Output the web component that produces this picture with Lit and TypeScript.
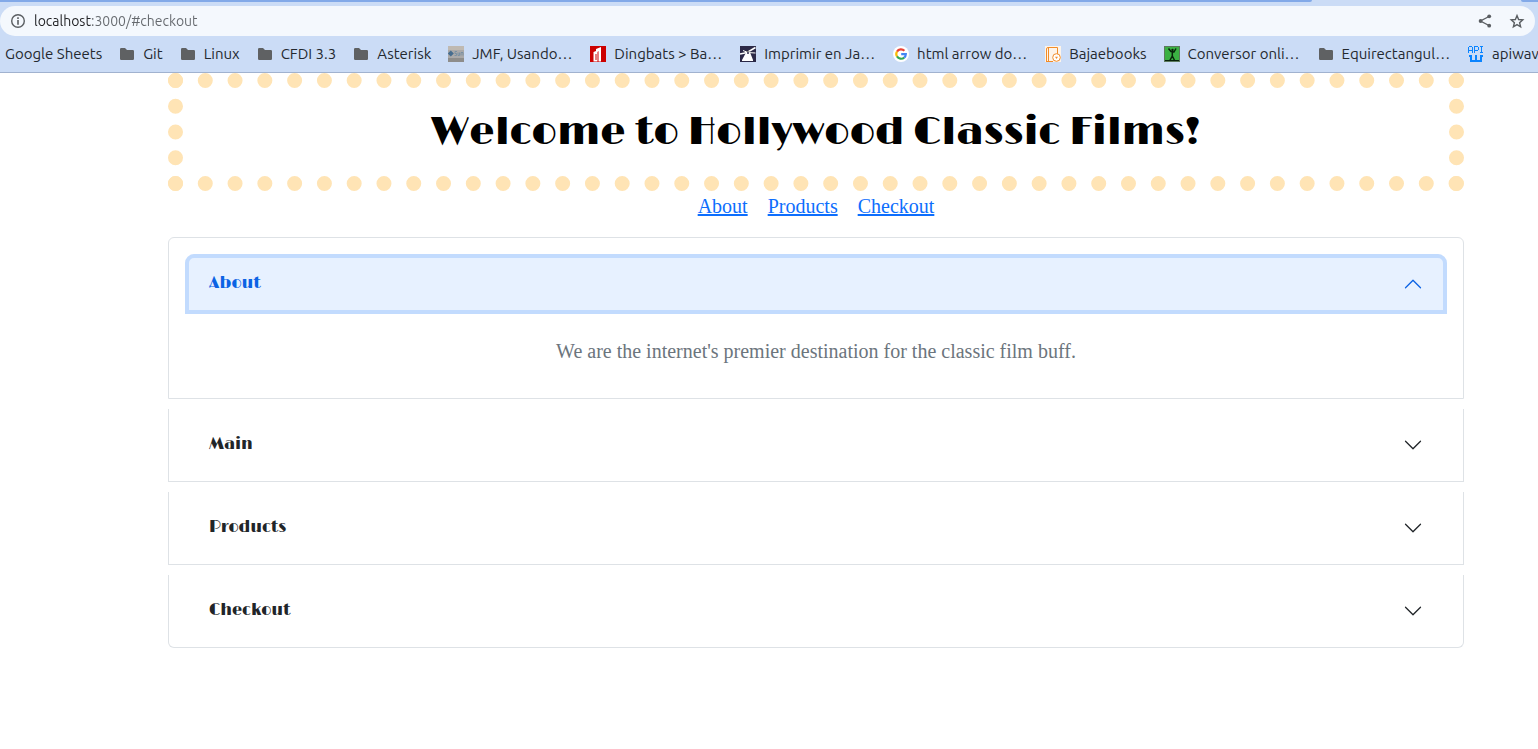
import { LitElement, html, svg, css, nothing } from "lit";
import { customElement, state } from "lit/decorators.js";

const folder = svg`<svg class="ico" viewBox="0 0 16 16"><path fill="#5f6163" d="M1 3.200Q1 2 2.200 2H6l2 2h5.800Q15 4 15 5.200v7.600q0 1.200-1.200 1.200H2.200Q1 14 1 12.800z"/></svg>`;

const icons: Record<string, unknown> = {
  folder,
  java: svg`<svg class="ico" viewBox="0 0 16 16">
    <rect width="16" height="16" fill="#aaa9a9"/><path fill="#bfb9b2" d="M0 0h16v4H0z"/>
    <path fill="#8e8d8b" d="M0 12h16v4H0z"/>
    <path fill="#466d8f" d="M2.800 4.500l3 3-3 3-3-3z"/>
    <path fill="none" stroke="#6f8ba2" stroke-width=".8" d="M9 5.500H7v2h1.500v2H6.500M10 6.500v3h1.500v-3M13 9.500v-3h2v3"/></svg>`,
  ding: svg`<svg class="ico" viewBox="0 0 16 16">
    <rect width="16" height="16" fill="#cc0000"/>
    <path fill="#fff" d="M3.500 6l2.500-1V3l5-2v14.500H8.500V5L7.500 6v9.500h-4z"/>
    <path fill="#cc0000" d="M5.500 8h1v6h-1z"/></svg>`,
  mill: svg`<svg class="ico" viewBox="0 0 16 16">
    <rect width="16" height="16" fill="#2b2947"/>
    <path fill="#fff" d="M5.500 7.500L8 5.500l2.500 2L13 14v1H2v-1z"/>
    <path stroke="#fff" stroke-width="1.500" d="M0 8l7-1.500L15.500 1.500"/>
    <path stroke="#fff" d="M3 4.500l5 2 7.500.5"/>
    <circle cx="8" cy="7" r="1" fill="#2b2947"/></svg>`,
  google: svg`<svg class="ico" viewBox="0 0 16 16">
    <circle cx="8" cy="8" r="8" fill="#fff"/>
    <g fill="none" stroke-width="2.200">
      <path stroke="#ea4335" d="M4 5.600A4.800 4.800 0 0 1 11.400 4.700"/>
      <path stroke="#fbbc05" d="M4 5.500a4.800 4.800 0 0 0 0 5"/>
      <path stroke="#34a853" d="M4 10.400a4.800 4.800 0 0 0 7.200 1.200"/>
      <path stroke="#4285f4" d="M11.200 11.600A4.800 4.800 0 0 0 12.800 8.200H8.200"/>
    </g></svg>`,
  book: svg`<svg class="ico" viewBox="0 0 16 16">
    <rect width="16" height="16" fill="#fdf4ea"/>
    <path fill="none" stroke="#f28c28" d="M1.500 15.500V3Q1.500 1.500 3 1.500h9.500v7M3.500 2v13.500M1 15.500h7"/>
    <circle cx="11.500" cy="11.500" r="3.800" fill="#fff" stroke="#f28c28"/>
    <path fill="#f28c28" d="M10 10.700h3l-1.500 2.200z"/></svg>`,
  green: svg`<svg class="ico" viewBox="0 0 16 16">
    <rect width="16" height="16" fill="#5c7a5e"/><rect x="1" y="1" width="14" height="14" fill="#3bb143"/>
    <path fill="none" stroke="#08240b" stroke-width="1.500" d="M4.500 2.500L7 5.500l3 .5 2-3.500M8.300 6v4l-2.500 4.500M8.300 10l2.300 4.500"/>
    <circle cx="8.500" cy="4" r="1.200" fill="#08240b"/><path fill="#08240b" d="M1 14h14v1H1z"/></svg>`,
  api: svg`<svg class="ico" viewBox="0 0 16 16" shape-rendering="crispEdges">
    <path fill="#0a84ff" d="M1 0h3v1H1zM0 1h1v6H0zM4 1h1v6H4zM1 4h3v1H1zM6 0h1v7H6zM7 0h3v1H7zM10 1h1v3h-1zM7 4h3v1H7zM12 0h3v1h-3zM13 1h1v5h-1zM12 6h3v1h-3z"/>
    <path fill="#0a84ff" d="M1 9h3v2H1zM2 11h2v3H2zM7 9h2v5H7zM12 9h3v2h-3zM12 11h2v3h-2zM2 14h12v2H2z"/></svg>`,
};

const bookmarks = [
  { label: "Google Sheets", icon: "" },
  { label: "Git", icon: "folder" },
  { label: "Linux", icon: "folder" },
  { label: "CFDI 3.3", icon: "folder" },
  { label: "Asterisk", icon: "folder" },
  { label: "JMF, Usando…", icon: "java" },
  { label: "Dingbats > Ba…", icon: "ding" },
  { label: "Imprimir en Ja…", icon: "mill" },
  { label: "html arrow do…", icon: "google" },
  { label: "Bajaebooks", icon: "book" },
  { label: "Conversor onli…", icon: "green" },
  { label: "Equirectangul…", icon: "folder" },
  { label: "apiwave", icon: "api" },
];

@customElement("browser-bar")
export class BrowserBar extends LitElement {
  static styles = css`
    :host {
      display: block;
      background: #cbdcf6;
      border-bottom: 1px solid #a1b2cf;
      font-family: Ubuntu, "Noto Sans", sans-serif;
      overflow: hidden;
    }
    .tabs {
      display: flex;
      height: 2px;
      margin-bottom: 4px;
    }
    .strip {
      flex: 1;
      background: #82a9e8;
      border-bottom-right-radius: 2px;
    }
    .strip-end {
      flex: 0 0 17px;
      margin-left: 209px;
      background: #82a9e8;
      border-bottom-left-radius: 2px;
    }
    .address {
      display: flex;
      align-items: center;
      height: 30px;
      margin-right: 3px;
      padding: 0 10px;
      border-radius: 15px;
      background: #f4f8fd;
    }
    .icon-btn {
      display: flex;
      padding: 0;
      border: 0;
      background: none;
    }
    .share {
      margin-right: 16px;
    }
    .ico {
      flex: none;
      width: 16px;
      height: 16px;
    }
    .url {
      flex: 1;
      min-width: 0;
      margin-left: 8px;
      padding: 0;
      border: 0;
      outline: 0;
      font: 14px/20px Ubuntu, "Noto Sans", sans-serif;
      color: transparent;
      background: linear-gradient(90deg, #202124 58px, #64686d 58px);
      -webkit-background-clip: text;
      background-clip: text;
    }
    .marks {
      display: flex;
      align-items: center;
      gap: 17px;
      height: 36px;
      padding-left: 5px;
    }
    .mark {
      display: flex;
      flex: none;
      align-items: center;
      gap: 8px;
      font-size: 15px;
      line-height: 20px;
      color: #24292f;
      text-decoration: none;
      white-space: nowrap;
    }
    .clipped {
      padding-right: 1px;
    }
  `;

  render() {
    return html`
      <div class="tabs"><span class="strip"></span><span class="strip-end"></span></div>
      <div class="address">
        <button class="icon-btn" aria-label="Site information">
          <svg class="ico" viewBox="0 0 16 16">
            <circle cx="8" cy="8" r="6.300" fill="none" stroke="#5a5e62" stroke-width="1.400" />
            <path fill="#5a5e62" d="M7.200 4.300h1.600v1.600H7.200zM7.200 7h1.600v4.800H7.200z" />
          </svg>
        </button>
        <input class="url" aria-label="Address" .value=${"localhost:3000/#checkout"} />
        <button class="icon-btn share" aria-label="Share">
          <svg class="ico" viewBox="0 0 16 16">
            <path d="M12 3.500L3.500 8l8.500 4.500" fill="none" stroke="#5a5e62" stroke-width="1.400" />
            <g fill="#5a5e62">
              <circle cx="12.200" cy="3.300" r="1.900" /><circle cx="3.600" cy="8" r="1.900" /><circle cx="12.200" cy="12.700" r="1.900" />
            </g>
          </svg>
        </button>
        <button class="icon-btn" aria-label="Bookmark this page">
          <svg class="ico" viewBox="0 0 16 16">
            <path
              d="M8 2.600l1.600 3.900 4.200.400-3.200 2.800 1 4.100L8 11.600l-3.600 2.200 1-4.100-3.200-2.800 4.200-.400z"
              fill="none" stroke="#5a5e62" stroke-width="1.400" />
          </svg>
        </button>
      </div>
      <nav class="marks" aria-label="Bookmarks">
        ${bookmarks.map(
          (b) => html`<a class="mark ${b.label.endsWith("…") ? "clipped" : ""}" href="#"
            >${b.icon ? icons[b.icon] : nothing}<span>${b.label}</span></a
          >`
        )}
      </nav>
    `;
  }
}

const sections = [
  { id: "about", title: "About", body: "We are the internet's premier destination for the classic film buff." },
  { id: "main", title: "Main", body: "" },
  { id: "products", title: "Products", body: "" },
  { id: "checkout", title: "Checkout", body: "" },
];

@customElement("app-root")
export class AppRoot extends LitElement {
  @state() private open = "about";

  static styles = css`
    :host {
      display: block;
      min-height: 100vh;
      background: #fff;
      color: #212529;
      font: 20px/30px "Liberation Serif", serif;
    }
    .page {
      padding: 0 74px 0 168px;
    }
    .banner {
      padding: 20px;
      border: 15px dotted #ffe4b5;
      text-align: center;
    }
    .title {
      margin: 0;
      font: 500 40px/48px Limelight, Inter, sans-serif;
      color: #000;
    }
    .links {
      display: flex;
      justify-content: center;
      gap: 20px;
      margin-bottom: 16px;
    }
    .link {
      color: #0d6efd;
    }
    .accordion {
      display: grid;
      gap: 10px;
    }
    .item {
      padding: 16px;
      border: 1px solid #dee2e6;
      border-top: 0;
    }
    .item:first-child {
      border-top: 1px solid #dee2e6;
      border-radius: 6px 6px 0 0;
    }
    .item:last-child {
      border-radius: 0 0 6px 6px;
    }
    .heading {
      margin: 0;
    }
    .toggle {
      display: flex;
      align-items: center;
      justify-content: space-between;
      box-sizing: border-box;
      width: 100%;
      height: 40px;
      padding: 0 24px;
      border: 0;
      background: none;
      color: #212529;
      font: 500 16px/20px Limelight, Inter, sans-serif;
    }
    .toggle.open {
      height: 60px;
      padding: 0 20px;
      border: 4px solid #c2dbfe;
      border-radius: 9px 9px 0 0;
      background: #e7f1ff;
      color: #0c63e4;
    }
    .name {
      padding-bottom: 2px;
    }
    .chevron {
      width: 20px;
      height: 20px;
    }
    .open .chevron {
      transform: rotate(180deg);
    }
    .body {
      margin: 0;
      padding: 22px 20px 16px;
      text-align: center;
      color: #6c757d;
    }
  `;

  private toggle(id: string) {
    this.open = this.open === id ? "" : id;
  }

  render() {
    return html`
      <browser-bar></browser-bar>
      <main class="page">
        <header class="banner"><h1 class="title">Welcome to Hollywood Classic Films!</h1></header>
        <nav class="links">
          <a class="link" href="#about">About</a>
          <a class="link" href="#products">Products</a>
          <a class="link" href="#checkout">Checkout</a>
        </nav>
        <div class="accordion">
          ${sections.map((s) => {
            const isOpen = this.open === s.id;
            return html`<section class="item">
              <h2 class="heading">
                <button class="toggle ${isOpen ? "open" : ""}" aria-expanded=${isOpen} @click=${() => this.toggle(s.id)}>
                  <span class="name">${s.title}</span>
                  <svg class="chevron" viewBox="0 0 16 16">
                    <path
                      fill="currentColor"
                      fill-rule="evenodd"
                      d="M1.646 4.646a.5.5 0 0 1 .708 0L8 10.293l5.646-5.647a.5.5 0 0 1 .708.708l-6 6a.5.5 0 0 1-.708 0l-6-6a.5.5 0 0 1 0-.708z"
                    />
                  </svg>
                </button>
              </h2>
              ${isOpen && s.body ? html`<p class="body">${s.body}</p>` : nothing}
            </section>`;
          })}
        </div>
      </main>
    `;
  }
}
